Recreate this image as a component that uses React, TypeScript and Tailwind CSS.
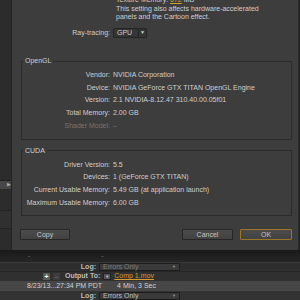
const openGl = [
  { label: 'Vendor:', value: 'NVIDIA Corporation' },
  { label: 'Device:', value: 'NVIDIA GeForce GTX TITAN OpenGL Engine' },
  { label: 'Version:', value: '2.1 NVIDIA-8.12.47 310.40.00.05f01' },
  { label: 'Total Memory:', value: '2.00 GB' },
  { label: 'Shader Model:', value: '–', dim: true },
];

const cuda = [
  { label: 'Driver Version:', value: '5.5' },
  { label: 'Devices:', value: '1 (GeForce GTX TITAN)' },
  { label: 'Current Usable Memory:', value: '5.49 GB (at application launch)' },
  { label: 'Maximum Usable Memory:', value: '6.00 GB' },
];

type Row = { label: string; value: string; dim?: boolean };

function Group({ title, rows, className }: { title: string; rows: Row[]; className: string }) {
  return (
    <fieldset className={`border border-[#2b2b2b] ${className}`}>
      <legend className="ml-[1px] px-[2px] leading-[8px] text-[#cfcfcf]">{title}</legend>
      <div className="pt-[4px] pb-[6px]">
        {rows.map((row) => (
          <div key={row.label} className={`flex leading-[12.7px] ${row.dim ? 'text-[#757575]' : ''}`}>
            <span className="w-[88px] shrink-0 text-right whitespace-nowrap">{row.label}</span>
            <span className="ml-[3px] whitespace-nowrap">{row.value}</span>
          </div>
        ))}
      </div>
    </fieldset>
  );
}

function Button({ label, primary, className }: { label: string; primary?: boolean; className?: string }) {
  return (
    <div
      className={`h-[11px] flex items-center justify-center rounded-[1px] border bg-gradient-to-b from-[#4c4c4c] to-[#424242] text-[#c4c4c4] ${
        primary ? 'border-[#9a7624]' : 'border-[#262626]'
      } ${className ?? ''}`}
    >
      {label}
    </div>
  );
}

function Dialog() {
  return (
    <div className="w-[287px] bg-[#3d3d3d] border-l border-[#232323] pl-[9px] pr-[6px] flex flex-col">
      <div className="pl-[95px] mt-[-5px] leading-[10px] whitespace-nowrap">
        Texture Memory: <span className="text-[#d39e2e] underline">672</span> MB
      </div>
      <div className="pl-[95px] leading-[8px] whitespace-nowrap">
        <div>This setting also affects hardware-accelerated</div>
        <div>panels and the Cartoon effect.</div>
      </div>

      <div className="flex items-center mt-[7px] h-[10px]">
        <span className="w-[89px] text-right">Ray-tracing:</span>
        <div className="ml-[3px] w-[34px] h-[10px] flex items-center border border-[#242424] bg-[#353535] rounded-[1px]">
          <span className="pl-[3px] flex-1">GPU</span>
          <span className="h-full border-l border-[#262626] w-[8px] flex items-center justify-center text-[5px]">▼</span>
        </div>
      </div>

      <Group title="OpenGL" rows={openGl} className="mt-[19px]" />
      <Group title="CUDA" rows={cuda} className="mt-[7px]" />

      <div className="flex mt-[13px]">
        <Button label="Copy" className="w-[50px] ml-[-1px]" />
        <Button label="Cancel" className="w-[51px] ml-auto" />
        <Button label="OK" primary className="w-[52px] ml-[7px]" />
      </div>
    </div>
  );
}

function LeftStrip() {
  return (
    <div className="w-[11px] flex flex-col bg-[#2c2c2c]">
      <div className="h-[181px] border-b border-[#1f1f1f]" />
      <div className="h-[8px] bg-[#474747] text-[5px] text-[#aaa] flex items-center justify-end">▶</div>
      <div className="h-[22px] border-b border-[#232323]" />
      <div className="h-[18px] bg-[#303030] border-b border-[#232323]" />
      <div className="flex-1" />
    </div>
  );
}

function Dropdown({ label, dim }: { label: string; dim?: boolean }) {
  return (
    <div className="w-[81px] h-[8px] flex items-center border border-[#1c1c1c] bg-[#3a3a3a] rounded-[1px]">
      <span className={`pl-[3px] flex-1 ${dim ? 'text-[#7c7c7c]' : 'text-[#bdbdbd]'}`}>{label}</span>
      <span className="pr-[3px] text-[4px] text-[#999]">▼</span>
    </div>
  );
}

function RenderQueue() {
  return (
    <div className="flex-1 flex flex-col">
      <div className="h-[12px] bg-gradient-to-b from-[#191919] to-[#262626] flex items-center text-[#7a7a7a]">
        <span className="ml-[28px]">-</span>
        <span className="ml-[71px]">-</span>
      </div>
      <div className="h-[9px] bg-[#2e2e2e] border-t border-[#383838] flex items-center">
        <span className="w-[96px] text-right font-bold text-[#bdbdbd]">Log:</span>
        <div className="ml-[3px]">
          <Dropdown label="Errors Only" dim />
        </div>
      </div>
      <div className="h-[10px] bg-[#303030] border-t border-[#262626] flex items-center">
        <span className="ml-[43px] w-[7px] h-[7px] bg-[#5a5a5a] text-white flex items-center justify-center font-bold leading-none">+</span>
        <span className="ml-[3px] w-[7px] h-[7px] bg-[#3c3c3c] text-[#777] flex items-center justify-center leading-none">–</span>
        <span className="ml-[5px] font-bold text-[#bdbdbd] whitespace-nowrap">Output To:</span>
        <span className="ml-[3px] w-[8px] h-[7px] bg-[#555] border border-[#222] text-[4px] text-[#ccc] flex items-center justify-center">▼</span>
        <span className="ml-[3px] text-[#d39e2e] underline whitespace-nowrap">Comp 1.mov</span>
      </div>
      <div className="h-[10px] bg-[#474747] flex items-center text-[#d2d2d2] whitespace-nowrap">
        <span className="ml-[27px]">8/23/13...27:34 PM PDT</span>
        <span className="ml-[15px]">4 Min, 3 Sec</span>
      </div>
      <div className="flex-1 bg-[#333] flex items-center">
        <span className="w-[96px] text-right font-bold text-[#bdbdbd]">Log:</span>
        <div className="ml-[3px]">
          <Dropdown label="Errors Only" />
        </div>
      </div>
    </div>
  );
}

export default function App() {
  return (
    <div className="w-[300px] h-[300px] overflow-hidden flex flex-col bg-[#2a2a2a] font-['Liberation_Sans',Arial,sans-serif] text-[7px] text-[#cfcfcf]">
      <div className="h-[250px] shrink-0 flex">
        <LeftStrip />
        <Dialog />
        <div className="w-[2px] bg-[#262626]" />
      </div>
      <RenderQueue />
    </div>
  );
}
